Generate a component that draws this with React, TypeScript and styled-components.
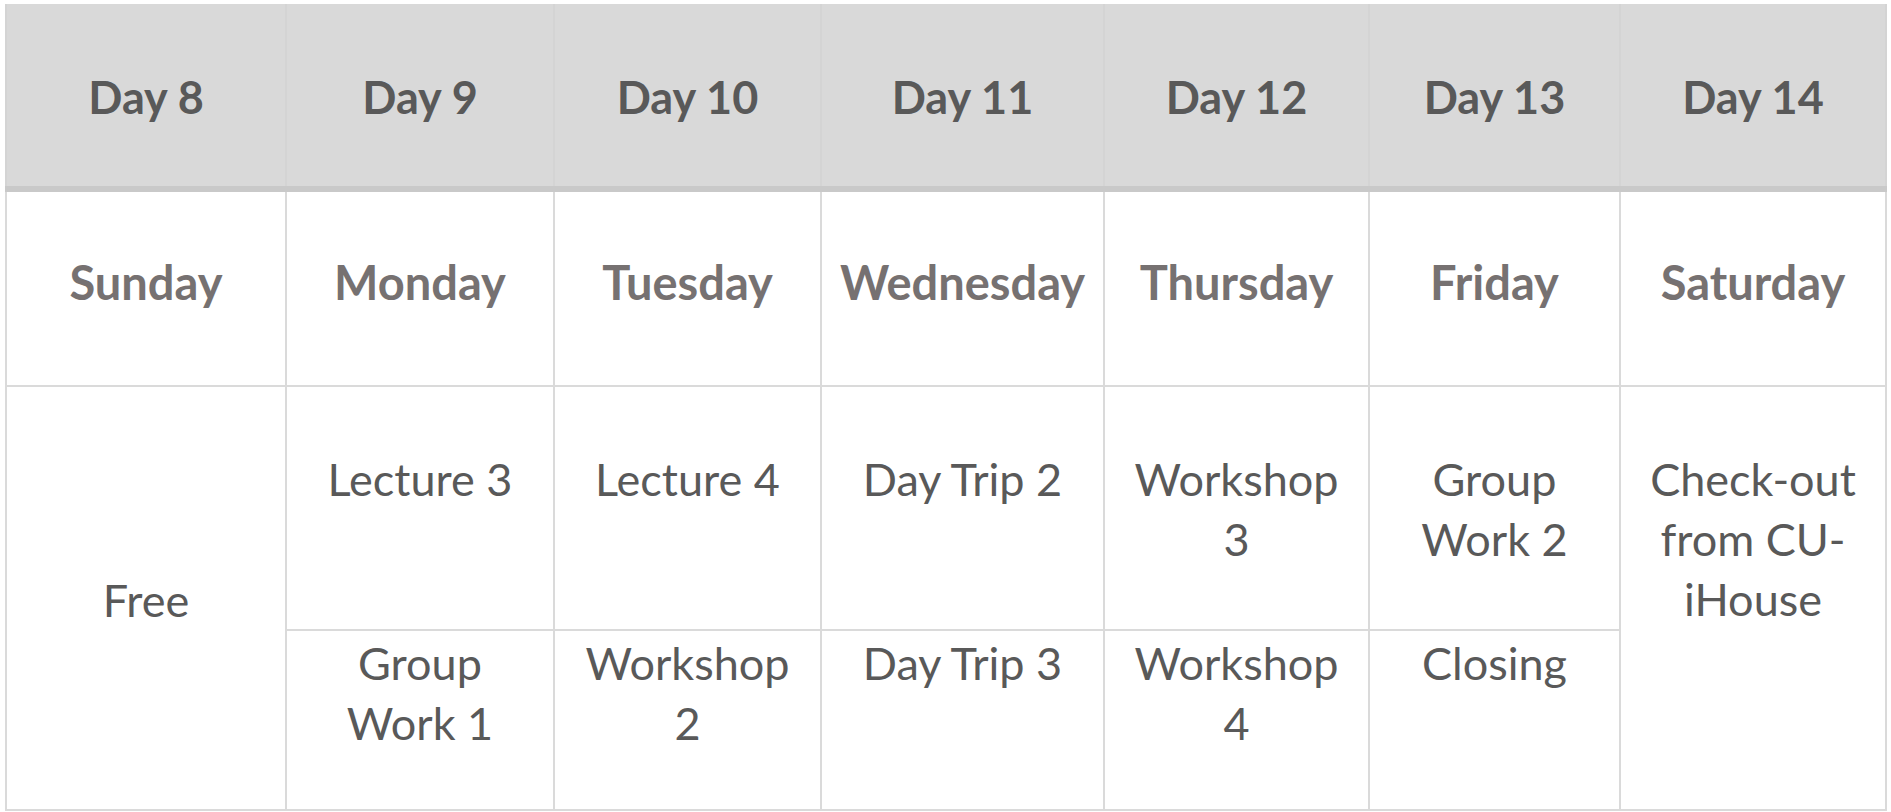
import { createGlobalStyle, styled } from "styled-components";

type Day = {
  day: string;
  name: string;
  full?: string[];
  fullTop?: boolean;
  am?: string[];
  pm?: string[];
};

const COLUMNS = [278, 266, 265, 281, 263, 249, 264];

const days: Day[] = [
  { day: "Day 8", name: "Sunday", full: ["Free"] },
  { day: "Day 9", name: "Monday", am: ["Lecture 3"], pm: ["Group", "Work 1"] },
  { day: "Day 10", name: "Tuesday", am: ["Lecture 4"], pm: ["Workshop", "2"] },
  { day: "Day 11", name: "Wednesday", am: ["Day Trip 2"], pm: ["Day Trip 3"] },
  { day: "Day 12", name: "Thursday", am: ["Workshop", "3"], pm: ["Workshop", "4"] },
  { day: "Day 13", name: "Friday", am: ["Group", "Work 2"], pm: ["Closing"] },
  { day: "Day 14", name: "Saturday", full: ["Check-out", "from CU-", "iHouse"], fullTop: true },
];

function Lines({ lines }: { lines: string[] }) {
  return (
    <Text>
      {lines.map((l) => (
        <Line key={l}>{l}</Line>
      ))}
    </Text>
  );
}

export default function App() {
  const morning: { key: string; lines: string[]; span?: boolean; top?: boolean }[] = [];
  const afternoon: { key: string; lines: string[] }[] = [];

  days.forEach((d) => {
    if (d.full) {
      morning.push({ key: d.day, lines: d.full, span: true, top: d.fullTop });
    } else {
      morning.push({ key: d.day, lines: d.am || [] });
      afternoon.push({ key: d.day, lines: d.pm || [] });
    }
  });

  return (
    <>
      <GlobalStyle />
      <Table>
        <HeaderRow>
          {days.map((d) => (
            <HeaderCell key={d.day}>{d.day}</HeaderCell>
          ))}
        </HeaderRow>
        <Body>
          {days.map((d) => (
            <NameCell key={d.name}>{d.name}</NameCell>
          ))}
          {morning.map((m) => (
            <Cell
              key={"am" + m.key}
              $span={m.span ? 2 : 1}
              $centered={!!m.span && !m.top}
              $pad={m.span && !m.top ? 4 : 62}
            >
              <Lines lines={m.lines} />
            </Cell>
          ))}
          {afternoon.map((a) => (
            <Cell key={"pm" + a.key} $span={1} $centered={false} $pad={2}>
              <Lines lines={a.lines} />
            </Cell>
          ))}
        </Body>
      </Table>
    </>
  );
}

const GlobalStyle = createGlobalStyle`
  body {
    margin: 0;
    background: #ffffff;
    font-family: Lato, "Open Sans", sans-serif;
  }
`;

const Table = styled.div`
  margin: 4px 0 0 5px;
  width: 1882px;
`;

const HeaderRow = styled.div`
  display: grid;
  grid-template-columns: ${COLUMNS.map((c) => c + "px").join(" ")};
  gap: 2px;
  padding: 0 2px;
  height: 182px;
  background: #d4d4d4;
  border-bottom: 6px solid #c9c9c9;
`;

const HeaderCell = styled.div`
  display: flex;
  align-items: center;
  justify-content: center;
  padding-top: 4px;
  background: #d9d9d9;
  color: #595959;
  font-size: 45px;
  font-weight: 700;
  line-height: 60px;
  white-space: nowrap;
`;

const Body = styled.div`
  display: grid;
  grid-template-columns: ${COLUMNS.map((c) => c + "px").join(" ")};
  grid-template-rows: 193px 242px 178px;
  gap: 2px;
  padding: 0 2px 2px;
  background: #dadada;
`;

const NameCell = styled.div`
  display: flex;
  align-items: center;
  justify-content: center;
  padding-bottom: 14px;
  background: #ffffff;
  color: #767171;
  font-size: 47px;
  font-weight: 700;
  line-height: 60px;
  white-space: nowrap;
`;

const Cell = styled.div<{ $span: number; $centered: boolean; $pad: number }>`
  grid-row: span ${(p) => p.$span};
  display: flex;
  justify-content: center;
  align-items: ${(p) => (p.$centered ? "center" : "flex-start")};
  padding-top: ${(p) => p.$pad}px;
  background: #ffffff;
  color: #595959;
  font-size: 45px;
  line-height: 60px;
`;

const Text = styled.div`
  display: flex;
  flex-direction: column;
  align-items: center;
`;

const Line = styled.span`
  white-space: nowrap;
`;
